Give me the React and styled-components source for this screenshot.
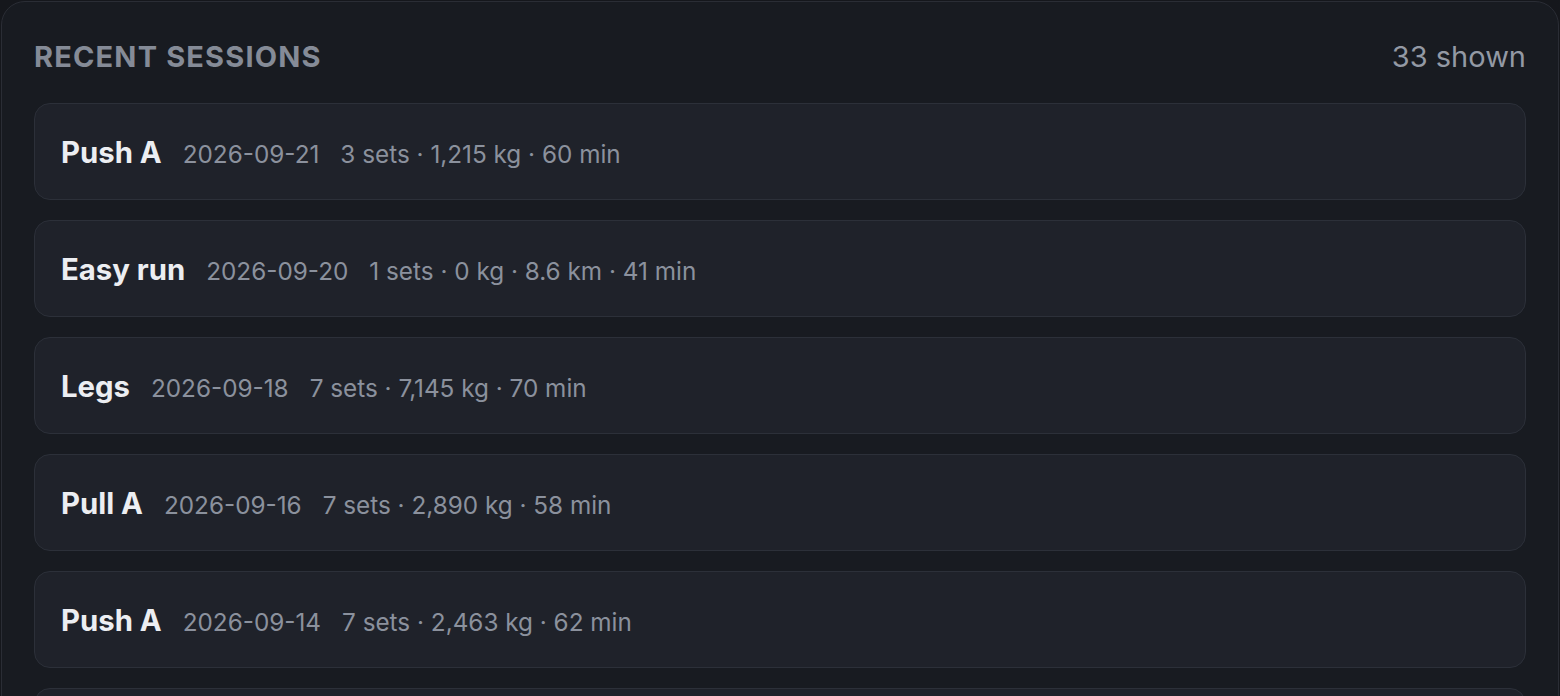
import React from 'react'
import styled, { createGlobalStyle } from 'styled-components'

const GlobalStyle = createGlobalStyle`
  html, body {
    margin: 0;
    padding: 0;
    background: #15171c;
    overflow: hidden;
  }
  body {
    font-family: Inter, "Noto Sans", "Liberation Sans", sans-serif;
    -webkit-font-smoothing: antialiased;
  }
`

const sessions = [
  { id: 1, name: 'Push A', date: '2026-09-21', sets: 3, kg: '1,215', min: 60 },
  { id: 2, name: 'Easy run', date: '2026-09-20', sets: 1, kg: '0', km: '8.6', min: 41 },
  { id: 3, name: 'Legs', date: '2026-09-18', sets: 7, kg: '7,145', min: 70 },
  { id: 4, name: 'Pull A', date: '2026-09-16', sets: 7, kg: '2,890', min: 58 },
  { id: 5, name: 'Push A', date: '2026-09-14', sets: 7, kg: '2,463', min: 62 },
  { id: 6, name: 'Tempo run', date: '2026-09-13', sets: 1, kg: '0', km: '6.2', min: 32 },
]

function SessionRow({ name, date, sets, kg, km, min }) {
  const parts = [`${sets} sets`, `${kg} kg`]
  if (km) parts.push(`${km} km`)
  parts.push(`${min} min`)

  return (
    <Row>
      <Line>
        <Name>{name}</Name>
        <Meta>{date}</Meta>
        <Meta>{parts.join(' · ')}</Meta>
      </Line>
    </Row>
  )
}

export default function App() {
  return (
    <>
      <GlobalStyle />
      <Panel>
        <Header>
          <Heading>Recent sessions</Heading>
          <Count>33 shown</Count>
        </Header>
        <List>
          {sessions.map((s) => (
            <SessionRow key={s.id} {...s} />
          ))}
        </List>
      </Panel>
    </>
  )
}

const Panel = styled.section`
  height: 760px;
  margin: 1px 1px 0;
  padding: 37px 32px 0;
  background: #181b21;
  border: 1px solid #2a2d35;
  border-radius: 24px;
  overflow: hidden;
`

const Header = styled.header`
  display: flex;
  justify-content: space-between;
  align-items: baseline;
  margin-bottom: 29px;
`

const Heading = styled.h2`
  margin: 0;
  font-size: 29px;
  font-weight: 700;
  text-transform: uppercase;
  letter-spacing: 0.04em;
  color: #858b97;
`

const Count = styled.span`
  font-size: 29px;
  color: #9399a4;
`

const List = styled.div`
  display: flex;
  flex-direction: column;
  gap: 20px;
`

const Row = styled.article`
  box-sizing: border-box;
  height: 97px;
  display: flex;
  align-items: center;
  padding: 0 26px;
  background: #1f222a;
  border: 1px solid #2c3039;
  border-radius: 16px;
`

const Line = styled.div`
  display: flex;
  align-items: baseline;
  gap: 21px;
  margin-top: 2px;
`

const Name = styled.span`
  font-size: 29.3px;
  font-weight: 700;
  color: #eceef2;
`

const Meta = styled.span`
  font-size: 24.3px;
  color: #8b919d;
`
